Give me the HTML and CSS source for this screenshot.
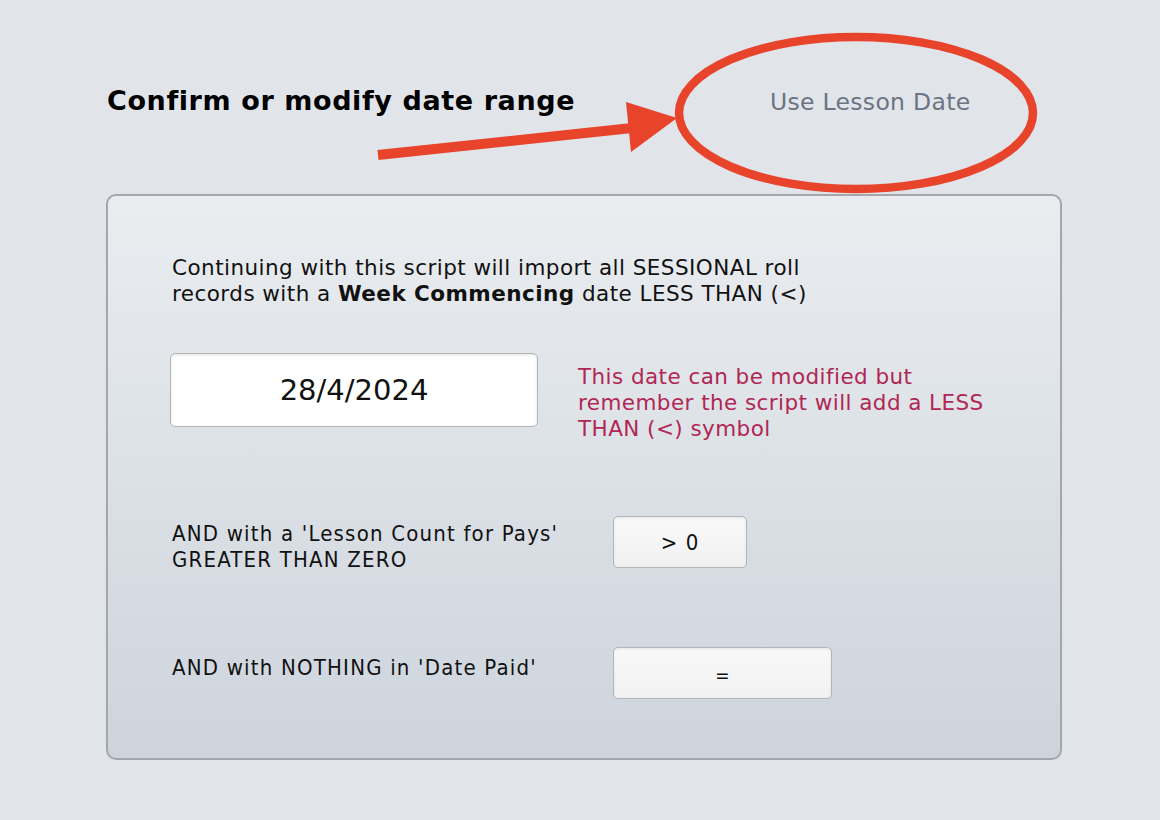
FILE: index.html
```html
<!DOCTYPE html>
<html lang="en">
<head>
<meta charset="utf-8">
<title>Confirm or modify date range</title>
<link rel="stylesheet" href="styles.css">
</head>
<body>
<div class="page">
  <header class="header">
    <h1 class="title">Confirm or modify date range</h1>
    <span class="lesson-link">Use Lesson Date</span>
  </header>

  <section class="panel">
    <p class="intro">Continuing with this script will import all SESSIONAL roll<br>records with a <b>Week Commencing</b> date LESS THAN (&lt;)</p>

    <div class="date-row">
      <div class="date-field">28/4/2024</div>
      <p class="note">This date can be modified but<br>remember the script will add a LESS<br>THAN (&lt;) symbol</p>
    </div>

    <div class="cond-row cond-count">
      <p class="cond-label">AND with a 'Lesson Count for Pays'<br>GREATER THAN ZERO</p>
      <div class="cond-field narrow">&gt; 0</div>
    </div>

    <div class="cond-row cond-paid">
      <p class="cond-label">AND with NOTHING in 'Date Paid'</p>
      <div class="cond-field wide">=</div>
    </div>
  </section>

  <svg class="markup" width="1160" height="820" viewBox="0 0 1160 820" aria-hidden="true">
    <line x1="378" y1="155" x2="632" y2="128" stroke="#e8432b" stroke-width="10"/>
    <polygon points="626,102 677,118 631,152" fill="#e8432b"/>
    <ellipse cx="856" cy="113" rx="177" ry="76" fill="none" stroke="#e8432b" stroke-width="8.5"/>
  </svg>
</div>
</body>
</html>
```

FILE: styles.css
```css
* { box-sizing: border-box; }

html, body {
  margin: 0;
  padding: 0;
}

body {
  background: #e1e5e9;
  font-family: "DejaVu Sans", Verdana, sans-serif;
  color: #111;
  width: 1160px;
  height: 820px;
  overflow: hidden;
}

.page {
  position: relative;
  width: 1160px;
  height: 820px;
  padding: 83px 0 0 106px;
}

.header {
  display: flex;
  align-items: flex-start;
  height: 111px;
}

.title {
  margin: 0;
  padding-left: 1px;
  font-size: 27px;
  letter-spacing: 0.6px;
  font-weight: bold;
  line-height: 36px;
  color: #000;
  width: 664px;
}

.lesson-link {
  margin-top: 4px;
  font-size: 23.5px;
  letter-spacing: 0.3px;
  line-height: 30px;
  color: #6b7483;
}

.panel {
  width: 956px;
  height: 566px;
  border: 2px solid #a3a7ab;
  border-radius: 10px;
  background: linear-gradient(to bottom, #eaedf0 0%, #dde2e7 45%, #cdd4dc 100%);
  padding: 59px 0 0 64px;
}

.intro {
  margin: 0;
  font-size: 21.5px;
  letter-spacing: 0.45px;
  line-height: 26px;
}

.date-row {
  display: flex;
  align-items: flex-start;
  margin-top: 46px;
}

.date-field {
  margin-left: -2px;
  width: 368px;
  height: 74px;
  background: #fff;
  border: 1.5px solid #b3b6b9;
  border-radius: 5px;
  box-shadow: inset 0 1px 3px rgba(0, 0, 0, 0.12);
  display: flex;
  align-items: center;
  justify-content: center;
  font-size: 29px;
  color: #111;
}

.note {
  margin: 11px 0 0 40px;
  font-size: 21.5px;
  letter-spacing: 0.43px;
  line-height: 26px;
  color: #b02754;
}

.cond-row {
  display: flex;
  align-items: flex-start;
  margin-top: 74px;
}

.cond-label {
  margin: 0;
  width: 441px;
  font-family: "DejaVu Sans Condensed", "DejaVu Sans", sans-serif;
  font-stretch: condensed;
  font-size: 22px;
  letter-spacing: 1.2px;
  line-height: 26px;
  color: #111;
}

.cond-count .cond-label { margin-top: 5px; }
.cond-paid .cond-label { margin-top: 8px; }

.cond-field {
  height: 52px;
  border: 1.5px solid #b3b5b8;
  border-radius: 5px;
  background: linear-gradient(to bottom, #f9f9f9, #f1f1f1);
  box-shadow: inset 0 1px 3px rgba(0, 0, 0, 0.08);
  display: flex;
  align-items: center;
  justify-content: center;
  font-family: "DejaVu Sans Condensed", "DejaVu Sans", sans-serif;
  font-stretch: condensed;
  font-size: 22px;
  color: #111;
}

.cond-field.narrow { width: 134px; letter-spacing: 1px; }
.cond-field.wide { width: 219px; padding-top: 4px; font-size: 19px; }

.markup {
  position: absolute;
  left: 0;
  top: 0;
  pointer-events: none;
}
```
